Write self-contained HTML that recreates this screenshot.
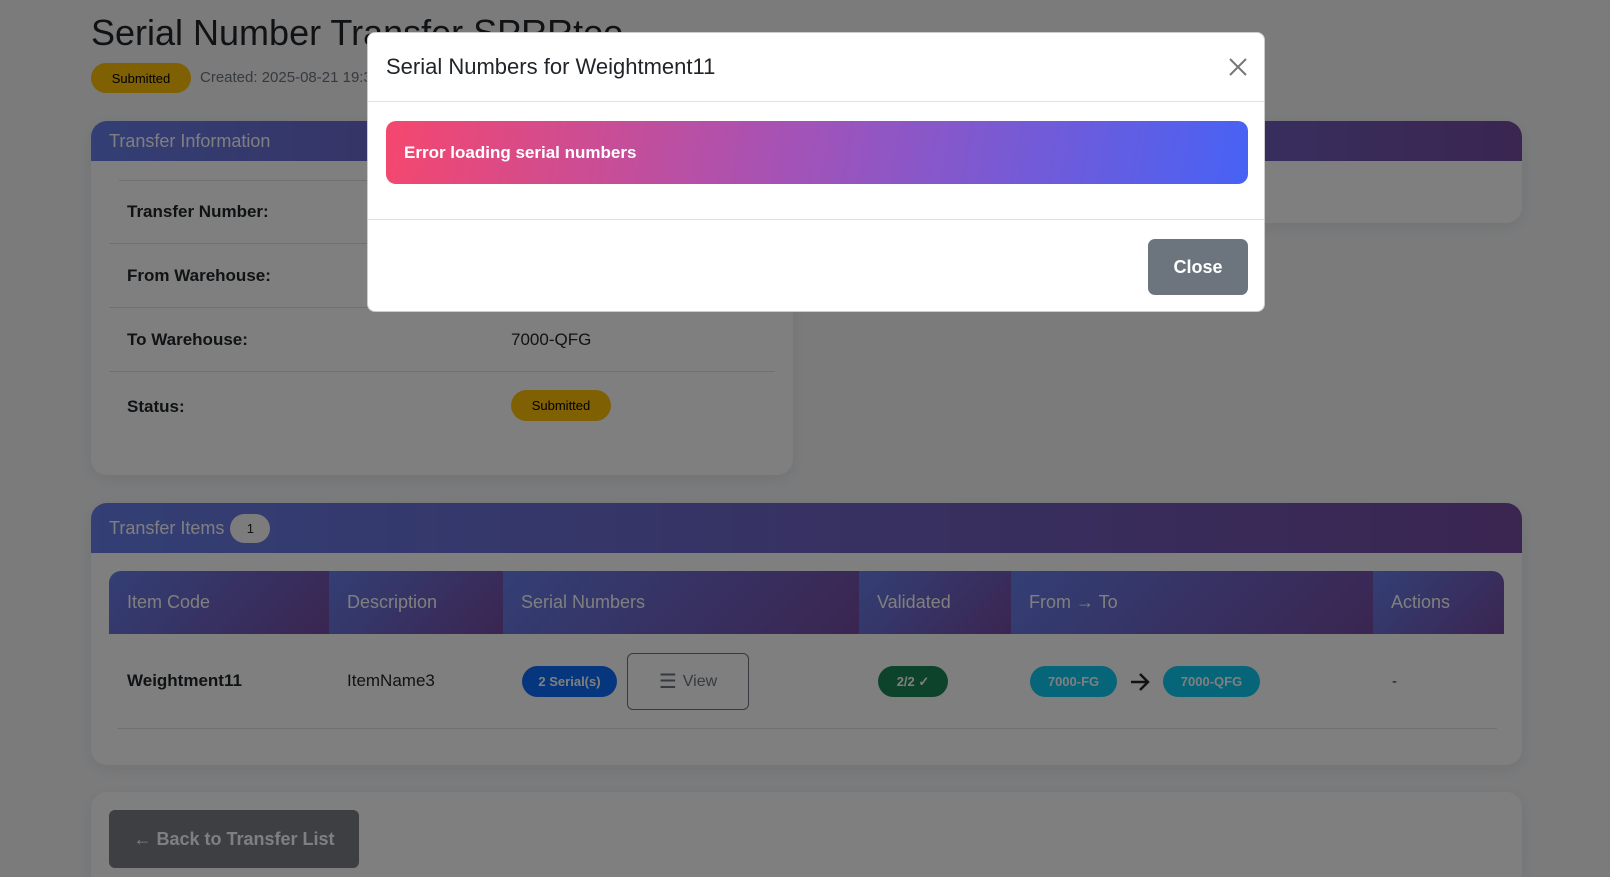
<!DOCTYPE html>
<html style="overflow:hidden"><head><meta charset="utf-8"><style>
*{box-sizing:border-box;margin:0;padding:0}
html,body{width:1610px;height:877px;overflow:hidden}
body{background:#f6f7f9;font-family:"Liberation Sans",sans-serif;color:#212529;position:relative}
.abs{position:absolute}
.card{position:absolute;background:#fff;border-radius:16px;box-shadow:0 4px 16px rgba(0,0,0,.08);overflow:hidden}
.ch{position:absolute;left:0;right:0;top:0;background:linear-gradient(90deg,#667eea,#764ba2);color:#fff;font-size:18px;padding-left:18px;display:flex;align-items:center}
.badge{position:absolute;border-radius:16px;font-size:13px;display:flex;align-items:center;justify-content:center}
.lbl{position:absolute;left:36px;font-size:17px;font-weight:bold}
.hr{position:absolute;height:1px;background:#dee2e6}
.th{position:absolute;top:0;height:63px;background:linear-gradient(135deg,#667eea,#764ba2);color:#fff;font-size:18px;display:flex;align-items:center;padding-left:18px}
.ov{position:absolute;left:0;top:0;width:1610px;height:877px;background:rgba(0,0,0,.5)}
</style></head><body>
<div class="abs" style="left:91px;top:12px;font-size:36px;font-weight:500">Serial Number Transfer SPRRtoo</div>
<div class="badge" style="left:91px;top:63px;width:100px;height:30px;background:#ffc107;color:#000">Submitted</div>
<div class="abs" style="left:200px;top:69px;font-size:15px;color:#6c757d">Created: 2025-08-21 19:30</div>

<div class="card" style="left:91px;top:121px;width:702px;height:354px">
 <div class="ch" style="height:40px">Transfer Information</div>
 <div class="hr" style="left:28px;width:640px;top:59px"></div>
 <div class="lbl" style="top:81px">Transfer Number:</div>
 <div class="hr" style="left:18px;width:666px;top:122px"></div>
 <div class="lbl" style="top:145px">From Warehouse:</div>
 <div class="hr" style="left:18px;width:666px;top:186px"></div>
 <div class="lbl" style="top:209px">To Warehouse:</div>
 <div class="abs" style="left:420px;top:209px;font-size:17px">7000-QFG</div>
 <div class="hr" style="left:18px;width:666px;top:250px"></div>
 <div class="lbl" style="top:276px">Status:</div>
 <div class="badge" style="left:420px;top:269px;width:100px;height:31px;background:#ffc107;color:#000">Submitted</div>
</div>
<div class="card" style="left:806px;top:121px;width:716px;height:102px">
 <div class="ch" style="height:40px"></div>
</div>

<div class="card" style="left:91px;top:503px;width:1431px;height:262px">
 <div class="ch" style="height:50px">Transfer Items <span style="display:inline-flex;margin-left:6px;width:40px;height:29px;border-radius:15px;background:#f8f9fa;color:#212529;font-size:13px;align-items:center;justify-content:center">1</span></div>
 <div class="abs" style="left:18px;top:68px;width:1395px;height:63px;border-radius:12px 12px 0 0;overflow:hidden">
  <div class="th" style="left:0;width:220px">Item Code</div>
  <div class="th" style="left:220px;width:174px">Description</div>
  <div class="th" style="left:394px;width:356px">Serial Numbers</div>
  <div class="th" style="left:750px;width:152px">Validated</div>
  <div class="th" style="left:902px;width:362px">From → To</div>
  <div class="th" style="left:1264px;width:131px">Actions</div>
 </div>
 <div class="abs" style="left:36px;top:168px;font-size:17px;font-weight:bold">Weightment11</div>
 <div class="abs" style="left:256px;top:168px;font-size:17px">ItemName3</div>
 <div class="badge" style="left:431px;top:163px;width:95px;height:31px;background:#0d6efd;color:#fff;font-weight:bold">2 Serial(s)</div>
 <div class="abs" style="left:536px;top:150px;width:122px;height:57px;border:1px solid #6c757d;border-radius:6px;display:flex;align-items:center;justify-content:center;font-size:16px;color:#6c757d"><span style="font-size:20px;margin-right:6px">☰</span>View</div>
 <div class="badge" style="left:787px;top:163px;width:70px;height:31px;background:#198754;color:#fff;font-weight:bold">2/2 ✓</div>
 <div class="badge" style="left:939px;top:163px;width:87px;height:31px;background:#0dcaf0;color:#fff;font-weight:bold">7000-FG</div>
 <svg class="abs" style="left:1038px;top:169px" width="22" height="20" viewBox="0 0 22 20"><path d="M2 10H19M11 2L19 10L11 18" stroke="#212529" stroke-width="2.5" fill="none"/></svg>
 <div class="badge" style="left:1072px;top:163px;width:97px;height:31px;background:#0dcaf0;color:#fff;font-weight:bold">7000-QFG</div>
 <div class="abs" style="left:1301px;top:170px;font-size:15px">-</div>
 <div class="hr" style="left:26px;width:1380px;top:225px"></div>
</div>

<div class="card" style="left:91px;top:792px;width:1431px;height:85px;border-radius:16px 16px 0 0">
 <div class="abs" style="left:18px;top:18px;width:250px;height:58px;background:#7b7f85;border-radius:6px;color:#fff;font-size:18px;font-weight:bold;display:flex;align-items:center;justify-content:center">← Back to Transfer List</div>
</div>

<div class="ov"></div>

<div class="abs" style="left:367px;top:32px;width:898px;height:280px;background:#fff;border-radius:8px;border:1px solid rgba(0,0,0,.2)">
 <div class="abs" style="left:18px;top:21px;font-size:22px">Serial Numbers for Weightment11</div>
 <svg class="abs" style="left:860px;top:24px" width="20" height="20" viewBox="0 0 20 20"><path d="M2 2L18 18M18 2L2 18" stroke="#777" stroke-width="2"/></svg>
 <div class="hr" style="left:0;right:0;top:68px"></div>
 <div class="abs" style="left:18px;top:88px;width:862px;height:63px;border-radius:10px;background:linear-gradient(100deg,#f5476e 0%,#a752b4 45%,#4762f5 100%);color:#fff;font-size:17px;font-weight:bold;display:flex;align-items:center;padding-left:18px">Error loading serial numbers</div>
 <div class="hr" style="left:0;right:0;top:186px"></div>
 <div class="abs" style="left:780px;top:206px;width:100px;height:56px;background:#6c757d;border-radius:7px;color:#fff;font-size:18px;font-weight:bold;display:flex;align-items:center;justify-content:center">Close</div>
</div>
</body></html>
